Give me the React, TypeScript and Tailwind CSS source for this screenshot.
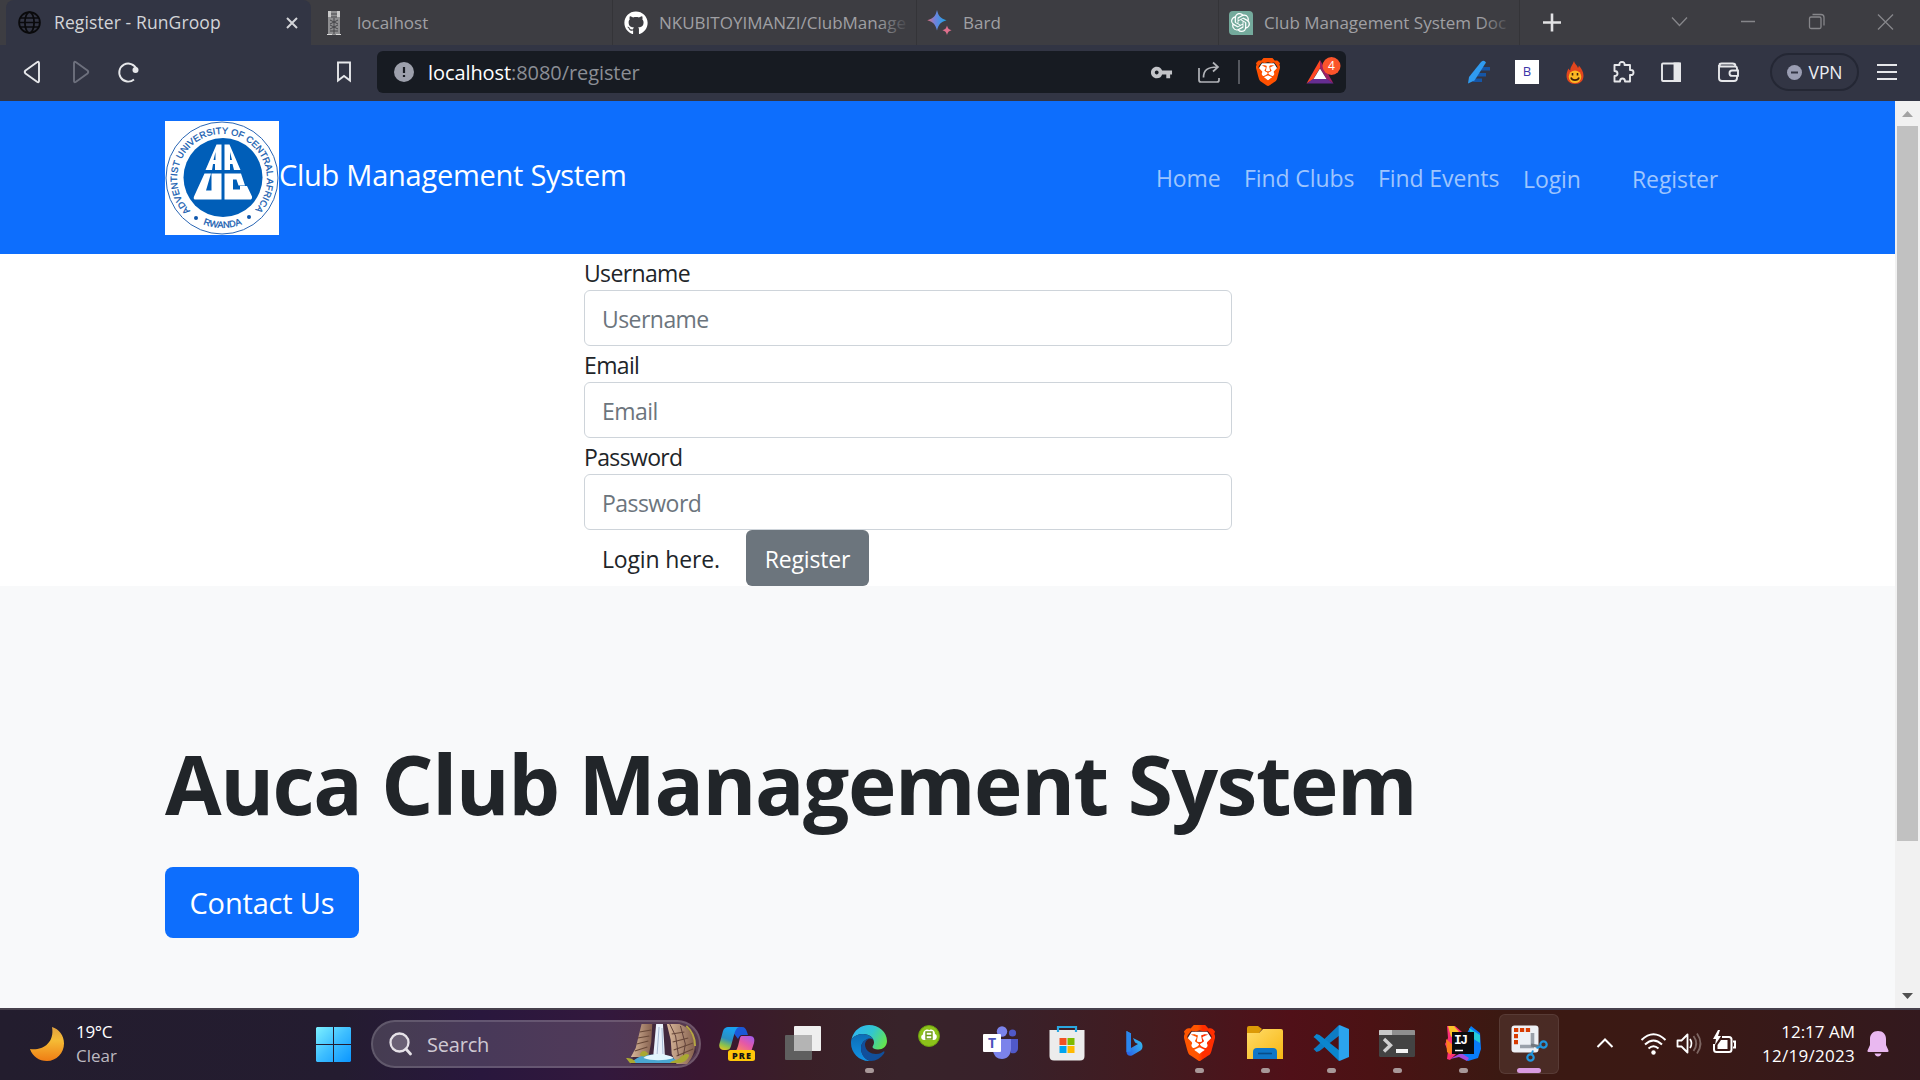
import type { ReactNode } from "react";
import { FaGithub } from "react-icons/fa";
import { SiBrave, SiOpenai } from "react-icons/si";
import { MdVpnKey } from "react-icons/md";

/* ---------- Browser icons ---------- */

function GlobeIcon() {
  return (
    <svg width="23" height="23" viewBox="0 0 23 23" fill="none" stroke="#0a0a0c" strokeWidth="1.8">
      <circle cx="11.5" cy="11.5" r="10.4" />
      <ellipse cx="11.5" cy="11.5" rx="4.6" ry="10.4" />
      <path d="M2.3 7h18.4M2.3 16h18.4M1 11.5h21" strokeWidth="1.4" />
    </svg>
  );
}

function TomcatIcon() {
  return (
    <svg width="14" height="24" viewBox="0 0 14 24">
      <rect x="1" width="12" height="24" rx="1" fill="#8e8e90" />
      <path d="M1 0h3v6H1zM10 0h3v6h-3z" fill="#c9c9c9" />
      <path d="M4 3h6M4 6h6M3 9l8 4M11 9l-8 4M3 14l8 4M11 14l-8 4M3 20h8M7 7v16" stroke="#46464a" strokeWidth="1" />
      <path d="M0 23.5h5M9 23.5h5" stroke="#dadada" />
    </svg>
  );
}

function BardIcon() {
  return (
    <svg width="25" height="25" viewBox="0 0 25 25">
      <defs>
        <linearGradient id="bard" x1="0" y1="0" x2="1" y2="0">
          <stop offset="0" stopColor="#e0707c" />
          <stop offset=".4" stopColor="#6f82dc" />
          <stop offset="1" stopColor="#1aa4e6" />
        </linearGradient>
      </defs>
      <path d="M10 0c1.4 6 3.600 8.500 9.500 10.200C13.600 12 11.400 14.500 10 20.500 8.600 14.500 6.400 12 .3 10.200 6.400 8.500 8.600 6 10 0z" fill="url(#bard)" />
      <path d="M20 15.600c.7 2.900 1.700 4 4.600 4.700-2.900.8-3.900 1.900-4.600 4.700-.7-2.800-1.700-3.900-4.600-4.700 2.900-.7 3.900-1.800 4.600-4.700z" fill="#de6f8c" />
    </svg>
  );
}

function BraveLogo({ id, w, h, from, to }: { id: string; w: number; h: number; from: string; to: string }) {
  return (
    <svg width={w} height={h} viewBox="2 0 20 24" preserveAspectRatio="none">
      <defs>
        <linearGradient id={id}>
          <stop offset=".45" stopColor={from} />
          <stop offset=".6" stopColor={to} />
        </linearGradient>
      </defs>
      <path d="M7 4.500h10l2.500 4-1.500 7-6 5-6-5-1.500-7z" fill="#fff" />
      <SiBrave size={24} style={{ fill: `url(#${id})` }} />
    </svg>
  );
}

function BatIcon() {
  return (
    <svg width="36" height="32" viewBox="0 0 36 32">
      <path d="M15 4 1.500 27.500 8 23.500 15 12z" fill="#ff4724" />
      <path d="M15 4 28.500 27.500 22 23.500 15 12z" fill="#9e1f63" />
      <path d="M1.500 27.500h27L22 23H8z" fill="#662d91" />
      <path d="M15 12.500 8.500 23h13z" fill="#fff" />
      <circle cx="26.500" cy="10" r="9" fill="#fb542b" />
      <text x="26.500" y="14.200" textAnchor="middle" fontSize="12" fill="#fff" fontFamily="Open Sans">4</text>
    </svg>
  );
}

function FlameIcon() {
  return (
    <svg width="18" height="23" viewBox="0 0 18 23">
      <path d="M8 0c.5 3 3.200 4 4 7 .7-.7.8-1.500.8-2.400 2.600 3 4.700 6 4.700 10.200C17.500 20 14 23 9 23S.5 20 .5 14.800c0-3.200 1-5.300 2-7.300.6 1 1 1.600 1.700 2C4.200 6 6.500 4 8 0z" fill="#e2451d" />
      <circle cx="9" cy="15.800" r="6.300" fill="#fcb823" />
      <path d="M6.500 12v2.500M11.500 12v2.500M5 16.500c1 3.500 7 3.500 8 0" stroke="#40220b" strokeWidth="1.600" fill="none" />
    </svg>
  );
}

/* ---------- University seal ---------- */

function SealLogo() {
  return (
    <svg width="114" height="114" viewBox="0 0 114 114" className="shrink-0 bg-white">
      <defs>
        <path id="sealArc" d="M25.200 89.800A45 45 0 1 1 89.400 89.200" />
        <path id="sealBottom" d="M27 96.600A50 50 0 0 0 88 96.600" />
      </defs>
      <circle cx="57" cy="57" r="56" fill="none" stroke="#2a66b4" strokeWidth="1" />
      <circle cx="58" cy="56.500" r="39.500" fill="#005eb8" />
      <text fontFamily="Liberation Sans" fontSize="9.200" fill="#0e57ad" stroke="#0e57ad" strokeWidth=".25">
        <textPath href="#sealArc" textLength="210" lengthAdjust="spacing">ADVENTIST UNIVERSITY OF CENTRAL AFRICA</textPath>
      </text>
      <text fontFamily="Liberation Sans" fontSize="9.200" fill="#0e57ad" stroke="#0e57ad" strokeWidth=".25" textAnchor="middle">
        <textPath href="#sealBottom" startOffset="50%">RWANDA</textPath>
      </text>
      <circle cx="31" cy="97" r="2" fill="#0e57ad" />
      <circle cx="84" cy="96" r="2" fill="#0e57ad" />
      <g fill="#fff" fillRule="evenodd">
        <path d="M51.500 23.500h5V49H50v-6h-2l-1 6h-6.500zM50.500 31l-2 8h2z" />
        <path d="M59.500 23.500h5L75.500 49H69l-1.500-6H65v6h-5.500zM65 31v8h2z" />
        <path d="M39.500 52.500H46l-5 17h5.500v-17h10v26H29.500q-1.500-1-.5-3z" />
        <path d="M59.500 52.500H76l4 12h-6.500l-2-6H68v10h7v-3.500h7l5 10.500q.5 2-1 3H59.500z" />
      </g>
    </svg>
  );
}

/* ---------- Taskbar icons ---------- */

function MoonIcon() {
  return (
    <svg width="34" height="34" viewBox="0 0 34 34">
      <defs>
        <linearGradient id="moon" x1="0" y1="0" x2="0" y2="1">
          <stop offset="0" stopColor="#e0a040" />
          <stop offset=".4" stopColor="#f5bb35" />
          <stop offset="1" stopColor="#ef7d14" />
        </linearGradient>
      </defs>
      <path d="M22 0c7 2 12 8.500 12 16.500C34 26 26.500 34 17 34 9 34 2.500 29.500 0 22c11 2 25-5 22-22z" fill="url(#moon)" />
    </svg>
  );
}

function WindowsIcon() {
  return (
    <svg width="35" height="35" viewBox="0 0 35 35" className="mb-0.5">
      <defs>
        <linearGradient id="win" x1="0" y1="0" x2="1" y2="1">
          <stop offset="0" stopColor="#7df1ff" />
          <stop offset=".5" stopColor="#3ebeff" />
          <stop offset="1" stopColor="#0a95ff" />
        </linearGradient>
      </defs>
      <path d="M1 0h16v17H0V1zM18 0h16l1 1v16H18zM0 18h17v17H1l-1-1zM18 18h17v16l-1 1H18z" fill="url(#win)" />
    </svg>
  );
}

function SearchIcon() {
  return (
    <svg width="24" height="24" viewBox="0 0 24 24" fill="none" stroke="#e6e2e8" strokeLinecap="round">
      <circle cx="10.500" cy="10.500" r="9" strokeWidth="2.300" fill="#6a6075" />
      <path d="m17 17 4.500 5" strokeWidth="2.800" />
    </svg>
  );
}

function WaterfallArt() {
  return (
    <svg width="71" height="40" viewBox="0 0 73 40" preserveAspectRatio="none">
      <defs>
        <linearGradient id="rock" x1="0" y1="0" x2="1" y2="0">
          <stop offset="0" stopColor="#d8b79a" />
          <stop offset="1" stopColor="#85604e" />
        </linearGradient>
      </defs>
      <path d="M18 0h38l12 8 4 20-9 12H5z" fill="#41283c" />
      <path d="M16 0h11l-1 18-3 15H5L10 24z" fill="url(#rock)" />
      <path d="M42 0h13c10 3 15 12 16 20 0 8-3 14-8 20H52l-5-10-1-14z" fill="url(#rock)" />
      <path d="M14 8l12-2M12 14l12-2M11 20l12-3M9 27l13-4M47 10l13-2M48 18l16-4M49 26l20-7M52 32l17-7" stroke="#684838" strokeWidth="1.200" />
      <path d="M45 0l6 12 3 20M56 2l5 18-2 12" stroke="#60403a" fill="none" />
      <path d="M31 0h7l2 32H28z" fill="#e9f1fb" />
      <path d="M34 3l-2 27M37 4l1 26" stroke="#a7b8d0" />
      <path d="M5 39c8-8 18-9 25-8 9 0 18 1 25 8z" fill="#4aa6d0" />
      <path d="M18 34c5-5 25-5 31 0-9 3-23 3-31 0z" fill="#e2f5fc" />
      <path d="M0 34c4 0 9 1 10 5H4zM14 31c2-5 6-5 9-1-3 3-6 3-9 1zM45 39c4-4 9-2 11-6 4-3 7-4 9-2-1 4-5 8-10 8z" fill="#a9a832" />
      <path d="M62 2c6 5 9 12 9 20" stroke="#b6a642" strokeWidth="2" fill="none" />
    </svg>
  );
}

function CopilotIcon() {
  return (
    <svg width="36" height="36" viewBox="0 0 36 36">
      <defs>
        <linearGradient id="cpA" x1=".3" y1="0" x2="0" y2="1">
          <stop offset="0" stopColor="#1aa0ee" />
          <stop offset=".45" stopColor="#2b8fc0" />
          <stop offset=".75" stopColor="#8ec24a" />
          <stop offset="1" stopColor="#f8c51b" />
        </linearGradient>
        <linearGradient id="cpB" x1="1" y1="0" x2=".2" y2="1">
          <stop offset="0" stopColor="#9a5cf5" />
          <stop offset=".5" stopColor="#e458a8" />
          <stop offset="1" stopColor="#ff8a5c" />
        </linearGradient>
      </defs>
      <path d="M10 2h13c3 0 4 2 5 5l1 3h-6c-2 0-3 2-4 4z" fill="#1b58d8" />
      <path d="M9 2h11c-3 1-4 4-5 8l-3 11c-1 3-2 4-5 4H5c-4 0-6-3-4-8L4 6c1-3 3-4 5-4z" fill="url(#cpA)" />
      <path d="M23 11h8c4 0 5 3 4 7l-3 9H14c3 0 4-3 5-6l2-8c.5-1.500 1-2 2-2z" fill="url(#cpB)" />
      <rect x="9" y="25" width="27" height="11" rx="2.500" fill="#ffc60a" />
      <text x="22.500" y="33.800" textAnchor="middle" fontFamily="Open Sans" fontWeight="800" fontSize="9" textLength="19" fill="#151515">PRE</text>
    </svg>
  );
}

function TaskViewIcon() {
  return (
    <svg width="36" height="36" viewBox="0 0 36 36">
      <rect x="0" y="10" width="27" height="25" rx="1" fill="#5f5f5f" />
      <rect x="9" y="1" width="27" height="25" rx="1" fill="#efefef" />
      <path d="M9 10h18v16H10l-1-1z" fill="#b4b4b4" />
    </svg>
  );
}

function EdgeIcon() {
  return (
    <svg width="36" height="36" viewBox="0 0 36 36">
      <defs>
        <linearGradient id="edgeTop" x1="0" y1=".3" x2="1" y2=".7">
          <stop offset="0" stopColor="#2fb5f2" />
          <stop offset=".5" stopColor="#32c6cf" />
          <stop offset="1" stopColor="#66e64a" />
        </linearGradient>
        <linearGradient id="edgeBody" x1="0" y1="0" x2="0" y2="1">
          <stop offset="0" stopColor="#0d6cb4" />
          <stop offset="1" stopColor="#1193e6" />
        </linearGradient>
      </defs>
      <path d="M.5 14C3 5 10 0 18 0c10 0 18 7 18 16 0 5-4 8.500-9 8.500-3 0-5.500-1-5.500-2.500 0-1 1.500-2 1.500-4.500C23 13 18.500 9 12 9 7 9 3 11 .5 14z" fill="url(#edgeTop)" />
      <path d="M0 18c0-2 .2-3 .5-4C3 11 7 9 12 9c5 0 9.500 3 10.500 6-1-1.200-2.500-1.500-4-1.500-4.500.5-8.500 4.500-8.500 9.500 0 7 5 12.500 10 13h-2C8 36 0 28 0 18z" fill="url(#edgeBody)" />
      <path d="M18.500 13.500C14.800 15 14 18 14 20c.5 6 6 9 11 9 4 0 6-1.500 7.500-2.500 1-.5 1.400.5.5 2C30 33 25 36 20 36c-6-1-10-6-10-13 0-5 4-9 8.500-9.500z" fill="#114f9b" />
    </svg>
  );
}

function CloudAppIcon() {
  return (
    <svg width="22" height="22" viewBox="0 0 22 22">
      <circle cx="11" cy="11" r="10.500" fill="#8cc21a" stroke="#6d9f10" />
      <path d="M6 15c-3 0-4-4.500-1-5.500C5 5 9 3.500 11.500 5 15 3.500 17 6.500 17 9c3 1 2 6-1 6z" fill="#fff" />
      <path d="M8 7h6v7H8zM8 10.500h6" stroke="#6e9b15" strokeWidth="1.400" fill="none" />
    </svg>
  );
}

function TeamsIcon() {
  return (
    <svg width="36" height="34" viewBox="0 0 36 34">
      <circle cx="29.500" cy="7" r="3.600" fill="#5059c9" />
      <path d="M27 13h8v9c0 4-3 6-7 5z" fill="#5059c9" />
      <circle cx="19" cy="5.500" r="5.200" fill="#7b83eb" />
      <path d="M12 13h16v10c0 6-4 10-9 10s-8-3-9-8z" fill="#7b83eb" />
      <rect y="8" width="18" height="18" rx="1" fill="#fff" />
      <text x="9" y="22" textAnchor="middle" fontFamily="Open Sans" fontWeight="700" fontSize="14" fill="#4b53bc">T</text>
    </svg>
  );
}

function StoreIcon() {
  return (
    <svg width="36" height="36" viewBox="0 0 36 36">
      <path d="M.5 5h35v26c0 3-1.500 4.500-4.500 4.500H5C2 35.500.5 34 .5 31z" fill="#ececec" />
      <path d="M9 7V2h18v5" fill="none" stroke="#2aa7e0" strokeWidth="2.200" />
      <path d="M10.500 13h7v7h-7z" fill="#f25022" />
      <path d="M18.500 13h7v7h-7z" fill="#7fba00" />
      <path d="M10.500 21h7v7h-7z" fill="#00a4ef" />
      <path d="M18.500 21h7v7h-7z" fill="#ffb900" />
    </svg>
  );
}

function BingIcon() {
  return (
    <svg width="17" height="25" viewBox="0 0 17 25" className="ml-[3px]">
      <defs>
        <linearGradient id="bing" x1="0" y1="1" x2="1" y2="0">
          <stop offset="0" stopColor="#2a5be8" />
          <stop offset="1" stopColor="#35d4f0" />
        </linearGradient>
      </defs>
      <path d="M.5 0 5 2.500V17l7-4-3-1.500L7 7l7 3.500c3 1.500 3.500 7 .5 9L6 24.500C3 25.500.5 24 .5 21z" fill="url(#bing)" />
      <path d="M.5 0 5 2.500v18l-4.500.5z" fill="#2a86ee" />
    </svg>
  );
}

function FolderIcon() {
  return (
    <svg width="36" height="34" viewBox="0 0 36 34">
      <defs>
        <linearGradient id="folder" x1="0" y1="0" x2="1" y2="1">
          <stop offset="0" stopColor="#ffdc68" />
          <stop offset="1" stopColor="#f8b612" />
        </linearGradient>
      </defs>
      <path d="M0 2q0-2 2-2h9l4 3-3 4H0z" fill="#dc9a06" />
      <path d="M0 7h12l4-4h18q2 0 2 2v28H0z" fill="url(#folder)" />
      <path d="M6 33v-7q0-4 4-4h16q4 0 4 4v7z" fill="#0f76c8" />
      <path d="M11 27.500h14" stroke="#084c88" strokeWidth="1.600" />
    </svg>
  );
}

function VsCodeIcon() {
  return (
    <svg width="36" height="36" viewBox="0 0 36 36">
      <path d="M26 0 2.500 22.500.5 24l3 3 3-1L27 10z" fill="#0e7cc4" />
      <path d="M26 36 2.500 13.500.5 12l3-3 3 1L27 26z" fill="#0b86cf" />
      <path d="M26.500 0 36 4v28l-9.500 4q-1-1-.8-2V2q-.2-1 .8-2z" fill="#2ba3ef" />
    </svg>
  );
}

function TerminalIcon() {
  return (
    <svg width="36" height="27" viewBox="0 0 36 27">
      <rect width="36" height="27" rx="1.500" fill="#434343" />
      <path d="M1 0h34q1 0 1 1v4H0V1q0-1 1-1z" fill="#8f8f8f" />
      <path d="M0 1q0-1 1-1h12v5H0z" fill="#c9c9c9" />
      <path d="m5 9 6.500 6.200L5 21.500" stroke="#d0d0d0" strokeWidth="3.400" fill="none" />
      <path d="M17 19h12v4H17z" fill="#f4f4f4" />
    </svg>
  );
}

function IntelliJIcon() {
  return (
    <svg width="36" height="36" viewBox="0 0 36 36">
      <path d="M2 1h8l7 6 4 12L5 35l-3-1 1-8-3-7 3-6z" fill="#fd2f77" />
      <path d="M3 1h6l6 7-9 4z" fill="#f9c228" />
      <path d="m1 14 7 6-2 10-4-3z" fill="#fc801d" />
      <path d="m22 8 4-7 9 7 1 16-3 9-10 3-8-5 7-8z" fill="#087cfa" />
      <path d="m24 3 11 7v8l-8-5z" fill="#24cbd8" />
      <path d="m5 34 11-6 8 5-2 3-8-4z" fill="#a34be0" />
      <rect x="7" y="7" width="22" height="22" fill="#0b0b0e" />
      <text x="9" y="19" fontFamily="Liberation Mono" fontWeight="700" fontSize="13" textLength="14" fill="#fff">IJ</text>
      <path d="M10 25.500h8" stroke="#fff" strokeWidth="1.500" />
    </svg>
  );
}

function SnippingIcon() {
  return (
    <svg width="37" height="37" viewBox="0 0 37 37">
      <rect x=".5" y=".5" width="27" height="27" rx="3" fill="#eef1f5" />
      <path d="M3 5h17" stroke="#d83b01" strokeWidth="4" strokeDasharray="4.300 1.600" fill="none" />
      <path d="M5 9v11" stroke="#d83b01" strokeWidth="4" strokeDasharray="4.300 1.600" fill="none" />
      <path d="M21.500 8v14M9 21.500h14" stroke="#9aa1aa" strokeWidth="3.600" />
      <path d="m20 20 8 1.500" stroke="#70777f" strokeWidth="3" />
      <circle cx="32.500" cy="19.500" r="3.200" fill="none" stroke="#2196dd" strokeWidth="2.200" />
      <circle cx="19.500" cy="32.500" r="3.200" fill="none" stroke="#2196dd" strokeWidth="2.200" />
      <path d="m29.500 21.500-4 1.500M20.500 29.500l1.500-4" stroke="#2196dd" strokeWidth="2" />
    </svg>
  );
}

/* ---------- Browser chrome ---------- */

function Tab({ icon, title, className }: { icon: ReactNode; title: string; className: string }) {
  return (
    <div className={`relative flex h-[45px] items-center border-r border-[#343438] ${className}`}>
      <span className="flex w-[25px] shrink-0 justify-center">{icon}</span>
      <span className="ml-[11px] whitespace-nowrap text-[17px] text-[#a0a0a4]">{title}</span>
      <span className="absolute right-1.5 h-6 w-8 bg-linear-to-r from-transparent to-[#3d3d42]" />
    </div>
  );
}

function TabStrip() {
  return (
    <div className="flex h-[45px] bg-[#3d3d42]">
      <div className="ml-1.5 flex h-[45px] w-[305px] items-center rounded-t-lg bg-[#323544] pl-3 pr-[13px]">
        <GlobeIcon />
        <span className="ml-[13px] flex-1 whitespace-nowrap text-[17.5px] tracking-[0.006em] text-[#d3d4d8]">Register - RunGroop</span>
        <svg width="12" height="12" viewBox="0 0 12 12" stroke="#d3d4d8" strokeWidth="2">
          <path d="m1 1 10 10M11 1 1 11" />
        </svg>
      </div>
      <Tab icon={<TomcatIcon />} title="localhost" className="w-[302px] pl-[10px]" />
      <Tab icon={<FaGithub size={24} color="#fff" />} title="NKUBITOYIMANZI/ClubManage" className="w-[304px] pl-[10px]" />
      <Tab icon={<BardIcon />} title="Bard" className="w-[302px] pl-[10px]" />
      <Tab
        icon={
          <span className="flex size-6 items-center justify-center rounded-[4px] rounded-br-none bg-[#74aa9c]">
            <SiOpenai size={19} color="#fff" />
          </span>
        }
        title="Club Management System Doc"
        className="w-[301px] pl-[9px]"
      />
      <svg width="400" height="45" viewBox="0 0 400 45" fill="none" stroke="#86868a" strokeWidth="1.300">
        <path d="M23 22.500h18M32 13.500v18" stroke="#e2e2e4" strokeWidth="2.600" />
        <path d="m152 17.500 7.500 8 7.500-8M221 21.500h14" />
        <rect x="289.500" y="17" width="11.500" height="11.500" rx="1.500" />
        <path d="M292.500 14.500h8.500q3 0 3 3v8M358 14.500l15 15M373 14.500l-15 15" />
      </svg>
    </div>
  );
}

function Toolbar() {
  return (
    <div className="flex h-14 items-center bg-[#323544] pb-0.5">
      <svg width="377" height="54" viewBox="0 0 377 54" fill="none" stroke="#e6e7ea" strokeWidth="1.900" strokeLinejoin="round" className="shrink-0">
        <path d="M39 18v18q0 2-2 .7L25.500 28.500q-1.500-1.500 0-3L37 17.300Q39 16 39 18z" />
        <path d="M74 18v18q0 2 2 .7l11.500-8.200q1.500-1.500 0-3L76 17.300Q74 16 74 18z" stroke="#6d707d" />
        <path d="M134 34.500A9 9 0 1 1 136.500 24" />
        <circle cx="135.500" cy="25" r="3" fill="#e6e7ea" stroke="none" />
        <path d="M338 17.500h12v18l-6-4.500-6 4.500z" strokeLinejoin="miter" />
      </svg>
      <div className="flex h-[42px] w-[969px] shrink-0 items-center rounded-md bg-[#171b22] pl-[17px]">
        <svg width="20" height="20" viewBox="0 0 20 20">
          <circle cx="10" cy="10" r="10" fill="#9da0ac" />
          <path d="M10 5v6M10 13v2" stroke="#171b22" strokeWidth="2.200" />
        </svg>
        <span className="ml-[14px] flex-1 pt-0.5 text-[20px] tracking-[-0.004em] text-[#8b8e95]">
          <span className="text-white">localhost</span>:8080/register
        </span>
        <MdVpnKey size={23} color="#c3c4c8" />
        <svg width="22" height="22" viewBox="0 0 22 22" fill="none" stroke="#b2b4b9" strokeWidth="1.700" className="ml-[25px]">
          <path d="M1 7v12q0 2 2 2h16q2 0 2-2v-2M5.500 16.500C5.500 9 10 6 19 6M15 1.500l5 4.500-5 4.500" />
        </svg>
        <span className="ml-[18px] mr-4 h-6 w-0.5 bg-[#55585f]" />
        <BraveLogo id="braveBar" w={24} h={28} from="#ff5000" to="#ff5000" />
        <span className="ml-[25px] mr-[5px]">
          <BatIcon />
        </span>
      </div>
      <div className="flex flex-1 items-center pl-[121px] pr-[23px]">
        <svg width="24" height="24" viewBox="0 0 24 24">
          <path d="M12 7h11v3.500H12zM10 13h9v3.500H9zM7 18.500h8V22H6z" fill="#1556a8" />
          <path d="M14 2q3-2.500 5 .5L7.500 20.500 1 23.500l1-6.500z" fill="#2f9bf0" />
        </svg>
        <span className="ml-6 flex size-6 items-center justify-center bg-white text-[13px] text-[#3b35a8]">B</span>
        <span className="ml-[27px]">
          <FlameIcon />
        </span>
        <svg width="127" height="26" viewBox="0 0 127 26" fill="none" stroke="#e6e7ea" strokeWidth="1.900" className="ml-[28px]">
          <path d="M3 6h4.500Q7 3 10 3t2.500 3H18v5q3.500-.5 3.500 2.500T18 16v6.500h-5q0-3-2.500-3T8 22.500H2.500V17q3 0 3-2.500t-3-2.500V6z" strokeLinejoin="round" />
          <rect x="50" y="4.500" width="18" height="17.500" rx="1" />
          <path d="M62.500 4.500H68V22h-5.500z" fill="#e6e7ea" />
          <path d="M125 10.500V9.500q0-2-2-2h-13q-2.500 0-2.500-1.600 0-1.400 2-1.400h11q3 0 3 2.500M107 6v13q0 3 3 3h12q3 0 3-3v-1.500M126 11.500h-6q-2.500 0-2.500 2.700t2.500 2.700h6z" />
        </svg>
        <div className="ml-[31px] flex h-[38px] w-[89px] items-center justify-center gap-[7px] rounded-full border-2 border-[#242734] text-[17.5px] tracking-[-0.005em] text-[#eceef2]">
          <svg width="15" height="15" viewBox="0 0 15 15">
            <circle cx="7.500" cy="7.500" r="7.500" fill="#9a9db2" />
            <path d="M4 7.500h7" stroke="#323544" strokeWidth="2" />
          </svg>
          <span className="pt-px">VPN</span>
        </div>
        <svg width="20" height="16" viewBox="0 0 20 16" stroke="#e6e7ea" strokeWidth="1.800" className="ml-auto">
          <path d="M0 1h20M0 8h20M0 15h20" />
        </svg>
      </div>
    </div>
  );
}

/* ---------- Web page ---------- */

function SiteNav() {
  return (
    <nav className="flex h-[153px] items-center bg-[#0d6efd] pl-[165px] text-[23px] tracking-[-0.004em] text-[#9ec5fe]">
      <SealLogo />
      <span className="mb-[5px] w-[877px] text-[29px] tracking-[-0.009em] text-white">Club Management System</span>
      <a className="mt-0.5 w-[88px]">Home</a>
      <a className="mt-0.5 w-[134px]">Find Clubs</a>
      <a className="mt-0.5 w-[145px]">Find Events</a>
      <a className="mt-1 w-[109px]">Login</a>
      <a className="mt-1">Register</a>
    </nav>
  );
}

function Field({ label }: { label: string }) {
  return (
    <div className="h-[92px]">
      <label className="flex h-9 items-center pt-0.5 text-[23px] tracking-[-0.028em]">{label}</label>
      <div className="flex h-14 items-center rounded-md border border-[#ced4da] pl-[17px] pt-0.5 text-[23px] tracking-[-0.024em] text-[#6c757d]">{label}</div>
    </div>
  );
}

function RegisterForm() {
  return (
    <form className="h-[332px] bg-white pl-[584px] text-[#212529]">
      <div className="w-[648px]">
        <Field label="Username" />
        <Field label="Email" />
        <Field label="Password" />
        <div className="flex h-14 text-[23px] tracking-[-0.007em]">
          <a className="flex w-[162px] items-center pl-[18px] pt-0.5">Login here.</a>
          <button type="button" className="flex w-[123px] items-center justify-center rounded-md bg-[#6c757d] pt-0.5 text-white">Register</button>
        </div>
      </div>
    </form>
  );
}

function Hero() {
  return (
    <section className="flex-1 bg-[#f8f9fa] pl-[165px] pt-[140px] text-[#212529]">
      <h1 className="h-[141px] whitespace-nowrap text-[82px] font-bold leading-[115px] tracking-[-0.0174em]">Auca Club Management System</h1>
      <button type="button" className="flex h-[71px] w-[194px] items-center justify-center rounded-lg bg-[#0d6efd] text-[29px] tracking-[-0.006em] text-white">
        Contact Us
      </button>
    </section>
  );
}

function Scrollbar() {
  return (
    <div className="flex w-[25px] flex-col items-center bg-[#f1f1f1]">
      <svg width="25" height="25" viewBox="0 0 25 25">
        <path d="m7 16 5.500-6 5.500 6z" fill="#a3a3a3" />
      </svg>
      <div className="h-[715px] w-[21px] bg-[#c1c1c1]" />
      <svg width="25" height="25" viewBox="0 0 25 25" className="mt-auto">
        <path d="m7 10 5.500 6 5.500-6z" fill="#505050" />
      </svg>
    </div>
  );
}

/* ---------- Taskbar ---------- */

const apps: { name: string; icon: ReactNode; running?: boolean; active?: boolean }[] = [
  { name: "copilot", icon: <CopilotIcon /> },
  { name: "taskview", icon: <TaskViewIcon /> },
  { name: "edge", icon: <EdgeIcon />, running: true },
  { name: "cloud", icon: <span className="mb-[14px] mr-3 block"><CloudAppIcon /></span> },
  { name: "teams", icon: <TeamsIcon /> },
  { name: "store", icon: <StoreIcon /> },
  { name: "bing", icon: <BingIcon /> },
  { name: "brave", icon: <BraveLogo id="braveTask" w={31} h={36} from="#ff5500" to="#ff2e00" />, running: true },
  { name: "explorer", icon: <FolderIcon />, running: true },
  { name: "vscode", icon: <VsCodeIcon />, running: true },
  { name: "terminal", icon: <TerminalIcon />, running: true },
  { name: "intellij", icon: <IntelliJIcon />, running: true },
  { name: "snipping", icon: <SnippingIcon />, active: true },
];

function Taskbar() {
  return (
    <footer className="h-[72px] border-t-2 border-[#47414c] text-white">
      <div className="flex h-full items-center bg-[linear-gradient(90deg,#231d2e_0,#241c30_340px,#29173d_480px,#32183d_600px,#3a1731_700px,#3a1f27_800px,#38232a_900px,#38212a_1000px,#421b20_1150px,#501018_1290px,#4b1214_1370px,#3b1912_1500px,#3b1914_1650px,#33191e_1920px)]">
        <div className="flex w-[316px] items-center gap-[12px] pb-[3px] pl-[30px]">
          <MoonIcon />
          <div className="text-[17px] leading-6">
            <div className="tracking-[-0.02em]">19°C</div>
            <div className="text-[#bdb9c0]">Clear</div>
          </div>
        </div>
        <WindowsIcon />
        <div className="mb-[3px] ml-5 flex h-12 w-[330px] items-center rounded-full border-2 border-white/15 bg-white/15 pl-4 pr-0.5">
          <SearchIcon />
          <span className="ml-[14px] flex-1 pt-[3px] text-[20px] tracking-[-0.01em] text-[#cfc9d3]">Search</span>
          <WaterfallArt />
        </div>
        <div className="ml-[3px] flex">
          {apps.map((app) => (
            <div key={app.name} className="relative flex h-[70px] w-[66px] items-center justify-center pb-2">
              {app.active && <span className="absolute left-[3px] top-1 h-[60px] w-[60px] rounded-md border border-white/8 bg-white/8" />}
              <span className="relative pt-1">{app.icon}</span>
              {app.running && <span className="absolute bottom-[7px] h-[5px] w-[9px] rounded-full bg-[#a89899]" />}
              {app.active && <span className="absolute bottom-[7px] h-[5px] w-6 rounded-full bg-[#d99be0]" />}
            </div>
          ))}
        </div>
        <svg width="175" height="40" viewBox="0 0 175 40" fill="none" stroke="#fff" strokeWidth="2" className="mb-1">
          <path d="m35.500 24 7.500-7.500 7.500 7.500" />
          <path d="M79.500 17q12-11.500 24 0M83 21.500q8.500-8 17 0M86.500 25.500q5-4.500 10 0" />
          <circle cx="91.500" cy="29.500" r="2.200" fill="#fff" stroke="none" />
          <path d="M115.500 17.500h4l6-6v18l-6-6h-4zM128 16q3 4.500 0 9" strokeLinejoin="round" strokeWidth="1.800" />
          <path d="M131.500 13q5.500 7.500 0 15M135 10.500q7 10 0 20" stroke="#7d6662" strokeWidth="1.800" />
          <path d="M160 14h7q2.500 0 2.500 2.500v10q0 2.500-2.500 2.500h-12.500q-2.500 0-2.500-2.500V21M171 18.500h2v6h-2" />
          <path d="M159 17h6.500v9h-10v-4z" fill="#fff" stroke="none" />
          <path d="m156 7-5 9h3l-1 6 6-9h-3l2-6z" fill="#fff" stroke="none" />
        </svg>
        <div className="ml-auto mr-[12px] pb-0.5 text-right text-[17px] leading-6">
          <div>12:17 AM</div>
          <div className="tracking-[0.016em]">12/19/2023</div>
        </div>
        <svg width="22" height="26" viewBox="0 0 22 26" fill="#e9b8f0" className="mr-[31px] mb-0.5 shrink-0">
          <path d="M11 0c5 0 8 3.500 8 8v6l2.500 5.500q.3 1.500-1 1.500h-19Q.2 21 .5 19.500L3 14V8c0-4.500 3-8 8-8zM7.500 22.500h7q-1 3-3.500 3t-3.500-3z" />
        </svg>
      </div>
    </footer>
  );
}

export default function App() {
  return (
    <div className="flex h-[1080px] w-[1920px] flex-col overflow-hidden bg-white font-['Open_Sans','Noto_Sans',sans-serif]">
      <TabStrip />
      <Toolbar />
      <div className="flex h-[907px]">
        <main className="flex flex-1 flex-col">
          <SiteNav />
          <RegisterForm />
          <Hero />
        </main>
        <Scrollbar />
      </div>
      <Taskbar />
    </div>
  );
}
